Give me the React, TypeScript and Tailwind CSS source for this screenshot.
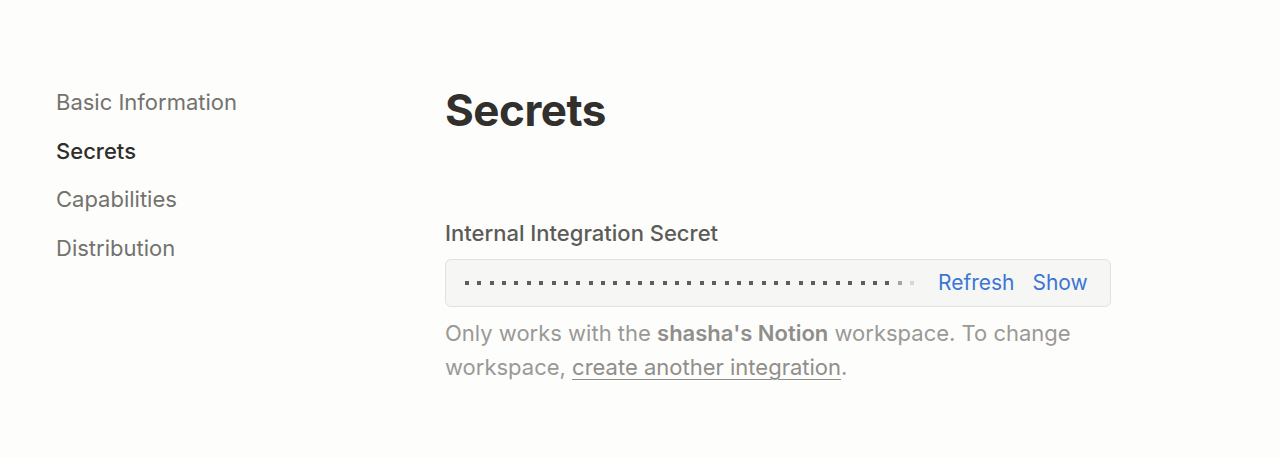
import type { ReactElement } from "react";

const NAV_ITEMS = ["Basic Information", "Secrets", "Capabilities", "Distribution"];

function dotColor(index: number, total: number): string {
  if (index === total - 1) return "bg-[#d6d6d3]";
  if (index === total - 2) return "bg-[#a5a4a1]";
  return "bg-[#5f5e5b]";
}

export default function App(): ReactElement {
  const dots = Array.from({ length: 37 }, (_, i) => i);

  return (
    <div
      className="flex h-[458px] w-full bg-[#fdfdfc] text-[#37352f]"
      style={{ fontFamily: "Inter, 'Noto Sans', sans-serif" }}
    >
      <nav className="flex w-[445px] shrink-0 flex-col gap-[20.5px] pl-[56px] pt-[88px]">
        {NAV_ITEMS.map((item) => (
          <a
            key={item}
            className={
              item === "Secrets"
                ? "text-[22px] leading-[28px] font-medium text-[#2f2e2b]"
                : "text-[22px] leading-[28px] text-[#73726e]"
            }
          >
            {item}
          </a>
        ))}
      </nav>

      <main className="flex w-[666px] flex-col pt-[83px]">
        <h1 className="text-[44px] leading-[54px] font-bold tracking-[-0.5px] text-[#32302c]">Secrets</h1>

        <section className="mt-[82px]">
          <p className="text-[22px] leading-[28px] font-medium text-[#5c5b57]">
            Internal Integration Secret
          </p>
          <div className="mt-[12px] flex h-[48px] items-center rounded-[6px] border border-[#e1e1de] bg-[#f6f6f4] pl-[19px] pr-[23px]">
            <div className="flex flex-1 items-center gap-[8.36px]">
              {dots.map((i) => (
                <span key={i} className={`h-[4px] w-[4px] shrink-0 ${dotColor(i, dots.length)}`} />
              ))}
            </div>
            <button className="ml-[24px] text-[21px] text-[#3a76d6]">Refresh</button>
            <button className="ml-[18px] text-[21px] text-[#3a76d6]">Show</button>
          </div>
          <p className="mt-[9px] text-[22px] leading-[34px] text-[#9a9996]">
            Only works with the <span className="font-semibold text-[#8f8e8b]">shasha's Notion</span> workspace. To
            change workspace,{" "}
            <a className="underline decoration-[1px] underline-offset-[4px] text-[#8f8e8b]">create another integration</a>.
          </p>
        </section>
      </main>
    </div>
  );
}
